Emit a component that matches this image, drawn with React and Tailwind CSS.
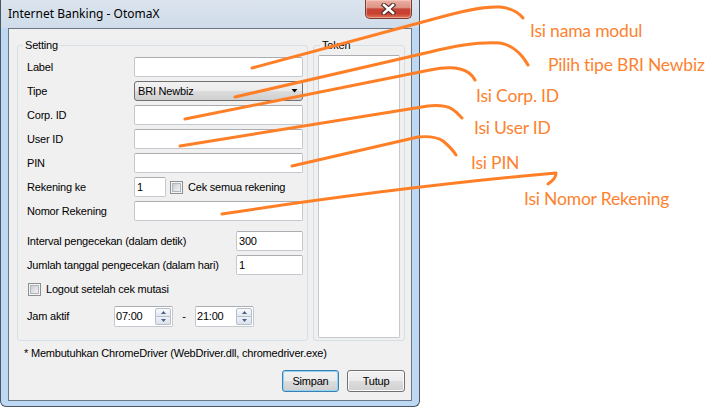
function CheckBox() {
  return (
    <span className="box-border block h-[13px] w-[13px] shrink-0 border border-[#8e8f8f] bg-[#f4f4f4] p-[1px]">
      <span className="block h-full w-full border border-[#b1b6bc] bg-[linear-gradient(135deg,#c9cdd3,#f3f3f3)]" />
    </span>
  );
}

function Spin() {
  return (
    <div className="flex h-[17px] w-[16px] shrink-0 flex-col">
      <div className="flex h-[9px] items-center justify-center rounded-t-[2px] border border-[#b4bfcc] bg-[linear-gradient(to_bottom,#f8fafc,#e2e8ef)]">
        <svg width="5" height="3" viewBox="0 0 5 3">
          <path d="M0 3 L2.5 0 L5 3 Z" fill="#4e6183" />
        </svg>
      </div>
      <div className="flex h-[8px] items-center justify-center rounded-b-[2px] border border-t-0 border-[#b4bfcc] bg-[linear-gradient(to_bottom,#eef2f6,#dbe2ea)]">
        <svg width="5" height="3" viewBox="0 0 5 3">
          <path d="M0 0 L2.5 3 L5 0 Z" fill="#4e6183" />
        </svg>
      </div>
    </div>
  );
}

function TimeBox({ value }) {
  return (
    <div className="flex h-[21px] w-[59px] shrink-0 items-center justify-between rounded-[2px] border border-[#c5c9cf] border-t-[#abadb3] bg-white pl-[1px] pr-[1px]">
      <span>{value}</span>
      <Spin />
    </div>
  );
}

function CloseButton() {
  return (
    <div className="flex h-[19px] w-[47px] items-center justify-center rounded-b-[5px] border border-t-0 border-[#7a3a32] bg-[linear-gradient(to_bottom,#ebb0a4_0%,#dc9384_42%,#c4463a_50%,#c93f2d_75%,#e0785c_100%)] shadow-[inset_0_0_0_1px_rgba(255,220,210,0.45)]">
      <svg width="15" height="12" viewBox="0 0 15 12">
        <path d="M3 2 L12 10 M12 2 L3 10" stroke="#4a2a26" strokeWidth="4.6" strokeLinecap="square" />
        <path d="M3 2 L12 10 M12 2 L3 10" stroke="#ffffff" strokeWidth="2.6" strokeLinecap="square" />
      </svg>
    </div>
  );
}

const tb =
  "h-[20px] shrink-0 rounded-[2px] border border-[#c5c9cf] border-t-[#abadb3] bg-white pl-[2px] flex items-center";

const note = "absolute font-['Lato',sans-serif] text-[17.5px] leading-[22px] text-[#fd8230]";

export default function App() {
  return (
    <div className="relative h-[408px] w-[724px] overflow-hidden bg-white font-['Liberation_Sans',Arial,sans-serif] text-[11px] leading-[13px] tracking-[-0.2px] text-black">
      <div className="flex h-[407px] w-[420px] flex-col rounded-b-[6px] border-x border-b border-[#4b5663] bg-[#bcd8f2]">
        {/* title bar */}
        <div className="flex h-[28px] shrink-0 items-start justify-between bg-[linear-gradient(to_bottom,#dbe4ee,#d0dcea)] pl-[7px] pr-[7px]">
          <span className="mt-[6px] font-['Noto_Sans',sans-serif] text-[12px] leading-[16px] tracking-normal">
            Internet Banking - OtomaX
          </span>
          <CloseButton />
        </div>

        {/* client */}
        <div className="mx-[7px] flex h-[373px] shrink-0 flex-col border border-[#6b7786] bg-[#f0f0f0]">
          <div className="mt-[10px] flex">
            <fieldset className="m-0 ml-[8px] h-[302px] w-[291px] shrink-0 rounded-[3px] border border-[#d5dfe5] p-0">
              <legend className="ml-[5px] px-[2px] leading-[13px]">Setting</legend>
              <div className="flex flex-col gap-[4px] pl-[9px] pr-[4px] pt-[5px]">
                <div className="flex h-[20px] items-center">
                  <span className="w-[107px] shrink-0">Label</span>
                  <div className={tb + " w-[169px]"} />
                </div>
                <div className="flex h-[20px] items-center">
                  <span className="w-[107px] shrink-0">Tipe</span>
                  <div className="flex h-[20px] w-[169px] shrink-0 items-center justify-between rounded-[3px] border border-[#707070] bg-[linear-gradient(to_bottom,#f2f2f2_0%,#ebebeb_50%,#dddddd_50%,#cfcfcf_100%)] pl-[3px] pr-[4px]">
                    <span>BRI Newbiz</span>
                    <svg width="7" height="4" viewBox="0 0 7 4">
                      <path d="M0.5 0 H6.5 L3.5 3.6 Z" fill="#000" />
                    </svg>
                  </div>
                </div>
                <div className="flex h-[20px] items-center">
                  <span className="w-[107px] shrink-0">Corp. ID</span>
                  <div className={tb + " w-[169px]"} />
                </div>
                <div className="flex h-[20px] items-center">
                  <span className="w-[107px] shrink-0">User ID</span>
                  <div className={tb + " w-[169px]"} />
                </div>
                <div className="flex h-[20px] items-center">
                  <span className="w-[107px] shrink-0">PIN</span>
                  <div className={tb + " w-[169px]"} />
                </div>
                <div className="flex h-[20px] items-center">
                  <span className="w-[107px] shrink-0">Rekening ke</span>
                  <div className={tb + " w-[32px]"}>1</div>
                  <span className="ml-[4px]">
                    <CheckBox />
                  </span>
                  <span className="ml-[5px]">Cek semua rekening</span>
                </div>
                <div className="flex h-[20px] items-center">
                  <span className="w-[107px] shrink-0">Nomor Rekening</span>
                  <div className={tb + " w-[169px]"} />
                </div>
                <div className="mt-[6px] flex h-[20px] items-center">
                  <span className="flex-1">Interval pengecekan (dalam detik)</span>
                  <div className={tb + " w-[67px]"}>300</div>
                </div>
                <div className="flex h-[20px] items-center">
                  <span className="flex-1">Jumlah tanggal pengecekan (dalam hari)</span>
                  <div className={tb + " w-[67px]"}>1</div>
                </div>
                <div className="flex h-[20px] items-center pl-[1px]">
                  <CheckBox />
                  <span className="ml-[5px]">Logout setelah cek mutasi</span>
                </div>
                <div className="mt-[3px] flex h-[21px] items-center">
                  <span className="w-[87px] shrink-0">Jam aktif</span>
                  <TimeBox value="07:00" />
                  <span className="w-[22px] text-center">-</span>
                  <TimeBox value="21:00" />
                </div>
              </div>
            </fieldset>

            <fieldset className="m-0 ml-[5px] h-[302px] w-[92px] shrink-0 rounded-[3px] border border-[#d5dfe5] p-0">
              <legend className="ml-[6px] px-[2px] leading-[13px]">Token</legend>
              <div className="flex h-[288px] flex-col px-[4px] pb-[2px] pt-[3px]">
                <div className="flex-1 rounded-[2px] border border-[#c5c9cf] border-t-[#abadb3] bg-white" />
              </div>
            </fieldset>
          </div>

          <div className="mt-[6px] pl-[15px]">* Membutuhkan ChromeDriver (WebDriver.dll, chromedriver.exe)</div>

          <div className="mt-[10px] flex justify-end gap-[8px] pr-[6px]">
            <button className="flex h-[22px] w-[57px] items-center justify-center rounded-[3px] border border-[#3c7fb1] bg-[linear-gradient(to_bottom,#f2f2f2_0%,#ebebeb_50%,#dddddd_50%,#cfcfcf_100%)] shadow-[inset_0_0_0_1px_#8fd3f5]">
              Simpan
            </button>
            <button className="flex h-[22px] w-[58px] items-center justify-center rounded-[3px] border border-[#707070] bg-[linear-gradient(to_bottom,#f2f2f2_0%,#ebebeb_50%,#dddddd_50%,#cfcfcf_100%)] shadow-[inset_0_0_0_1px_#fbfbfb]">
              Tutup
            </button>
          </div>
        </div>
      </div>

      {/* annotation overlay */}
      <svg
        className="pointer-events-none absolute left-0 top-0"
        width="724"
        height="408"
        viewBox="0 0 724 408"
        fill="none"
        stroke="#ff7f27"
        strokeWidth="3"
        strokeLinecap="round"
        strokeLinejoin="round"
      >
        <path d="M252 68 L430 20 C458 12 482 6 500 7 C510 8 518 12 523 18" />
        <path d="M235 97 L430 52 C458 45 484 42 500 43 C512 45 522 54 528 65" />
        <path d="M185 119 L430 70 C440 68 452 67 460 69 C468 71 473 76 475 80" />
        <path d="M180 146 L428 106 C438 105 447 106 452 109 C457 112 460 116 462 118" />
        <path d="M292 166 L418 137 C428 136 437 137 443 141 C449 146 453 150 456 155" />
        <path d="M222 214 Q400 187 556 173 Q556 179 548 184" />
      </svg>
      <div className={note + " left-[530px] top-[20px]"}>Isi nama modul</div>
      <div className={note + " left-[548px] top-[54px]"}>Pilih tipe BRI Newbiz</div>
      <div className={note + " left-[476px] top-[85px]"}>Isi Corp. ID</div>
      <div className={note + " left-[474px] top-[117px]"}>Isi User ID</div>
      <div className={note + " left-[471px] top-[152px]"}>Isi PIN</div>
      <div className={note + " left-[524px] top-[188px]"}>Isi Nomor Rekening</div>
    </div>
  );
}
